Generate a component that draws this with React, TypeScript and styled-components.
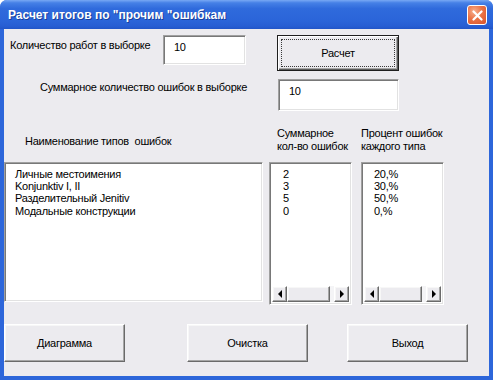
import styled, { createGlobalStyle } from "styled-components";

const GlobalStyle = createGlobalStyle`
  html, body {
    margin: 0;
    padding: 0;
    background: #ffffff;
  }
  * {
    box-sizing: border-box;
  }
`;

const errorTypes = [
  { name: "Личные местоимения", count: 2, percent: "20,%" },
  { name: "Konjunktiv I, II", count: 3, percent: "30,%" },
  { name: "Разделительный Jenitiv", count: 5, percent: "50,%" },
  { name: "Модальные конструкции", count: 0, percent: "0,%" },
];

const ScrollBar = () => (
  <HScroll>
    <ArrowButton>
      <Triangle $dir="left" />
    </ArrowButton>
    <Thumb />
    <Track />
    <ArrowButton>
      <Triangle $dir="right" />
    </ArrowButton>
  </HScroll>
);

const App = () => {
  return (
    <>
      <GlobalStyle />
      <Window>
        <TitleBar>
          <Title>Расчет итогов по "прочим "ошибкам</Title>
          <CloseButton>
            <svg width="11" height="11" viewBox="0 0 11 11">
              <path d="M1.5 1.5 L9.5 9.5 M9.5 1.5 L1.5 9.5" stroke="#fff" strokeWidth="2.2" strokeLinecap="round" />
            </svg>
          </CloseButton>
        </TitleBar>
        <Body>
          <TopRow>
            <Label $width={159} $indent={6} $top={4}>
              Количество работ в выборке
            </Label>
            <TextBox $width={83} $height={30}>10</TextBox>
            <DefaultButton>
              <FocusRect>Расчет</FocusRect>
            </DefaultButton>
          </TopRow>
          <SecondRow>
            <Label $width={274} $indent={36} $top={2}>
              Суммарное количество ошибок в выборке
            </Label>
            <TextBox $width={121} $height={32}>10</TextBox>
          </SecondRow>
          <HeaderRow>
            <Label $width={273} $indent={21} $top={8}>
              Наименование типов&nbsp; ошибок
            </Label>
            <ColumnHeader $width={84}>
              Суммарное
              <br />
              кол-во ошибок
            </ColumnHeader>
            <ColumnHeader $width={90}>
              Процент ошибок
              <br />
              каждого типа
            </ColumnHeader>
          </HeaderRow>
          <ListRow>
            <ListBox $width={259} $height={140} $offset={0}>
              <ListItems $pad={8}>
                {errorTypes.map((t) => (
                  <ListItem key={t.name}>{t.name}</ListItem>
                ))}
              </ListItems>
            </ListBox>
            <ListBox $width={83} $height={143} $offset={6}>
              <ListItems $pad={11}>
                {errorTypes.map((t) => (
                  <ListItem key={t.name}>{t.count}</ListItem>
                ))}
              </ListItems>
              <ScrollBar />
            </ListBox>
            <ListBox $width={83} $height={143} $offset={9}>
              <ListItems $pad={10}>
                {errorTypes.map((t) => (
                  <ListItem key={t.name}>{t.percent}</ListItem>
                ))}
              </ListItems>
              <ScrollBar />
            </ListBox>
          </ListRow>
          <ButtonRow>
            <PushButton $offset={0}>Диаграмма</PushButton>
            <PushButton $offset={62}>Очистка</PushButton>
            <PushButton $offset={39}>Выход</PushButton>
          </ButtonRow>
        </Body>
      </Window>
    </>
  );
};

export default App;

const uiFont = `"Liberation Sans", Arial, sans-serif`;

const Window = styled.div`
  width: 493px;
  height: 380px;
  display: flex;
  flex-direction: column;
  background: #2d66da;
  border-radius: 7px 7px 0 0;
  overflow: hidden;
`;

const TitleBar = styled.div`
  height: 29px;
  flex-shrink: 0;
  display: flex;
  align-items: center;
  justify-content: space-between;
  padding: 0 6px 0 8px;
  background: linear-gradient(
    to bottom,
    #78a8f4 0%,
    #4580e6 10%,
    #2f6adc 30%,
    #2b65d9 70%,
    #275ed3 90%,
    #2155c8 100%
  );
`;

const Title = styled.span`
  font-family: "Liberation Sans", Arial, sans-serif;
  font-weight: bold;
  font-size: 12px;
  color: #ffffff;
  text-shadow: 1px 1px 0 #1a3f9a;
  margin-top: 1px;
`;

const CloseButton = styled.div`
  width: 20px;
  height: 20px;
  border: 1px solid #ffffff;
  border-radius: 3px;
  display: flex;
  align-items: center;
  justify-content: center;
  background: radial-gradient(circle at 35% 30%, #f7b08f 0%, #ea7346 45%, #d8522a 100%);
  margin-top: 1px;
`;

const Body = styled.div`
  flex: 1;
  display: flex;
  flex-direction: column;
  background: #ecebef;
  margin: 0 4px 4px 4px;
  font-family: ${uiFont};
  font-size: 11px;
  letter-spacing: -0.25px;
  color: #000000;
`;

const TopRow = styled.div`
  display: flex;
  align-items: flex-start;
  margin-top: 6px;
`;

const SecondRow = styled.div`
  display: flex;
  align-items: flex-start;
  margin-top: 8px;
`;

const HeaderRow = styled.div`
  display: flex;
  align-items: flex-start;
  margin-top: 16px;
  height: 35px;
`;

const ListRow = styled.div`
  display: flex;
  align-items: flex-start;
`;

const ButtonRow = styled.div`
  display: flex;
  margin-top: 19px;
`;

const Label = styled.div<{ $width: number; $indent: number; $top: number }>`
  width: ${(p) => p.$width}px;
  flex-shrink: 0;
  padding-left: ${(p) => p.$indent}px;
  padding-top: ${(p) => p.$top}px;
  white-space: nowrap;
  line-height: 13px;
`;

const ColumnHeader = styled.div<{ $width: number }>`
  width: ${(p) => p.$width}px;
  flex-shrink: 0;
  line-height: 13px;
  white-space: nowrap;
`;

const sunken = `
  background: #ffffff;
  border: 1px solid;
  border-color: #a0a0a0 #ffffff #ffffff #a0a0a0;
  box-shadow: inset 1px 1px 0 #787878, inset -1px -1px 0 #e2e2e2;
`;

const TextBox = styled.div<{ $width: number; $height: number }>`
  ${sunken}
  flex-shrink: 0;
  width: ${(p) => p.$width}px;
  height: ${(p) => p.$height}px;
  padding: 5px 0 0 10px;
  line-height: 13px;
`;

const raised = `
  background: #ecebef;
  border: 1px solid;
  border-color: #ffffff #6a6a6a #6a6a6a #ffffff;
  box-shadow: inset -1px -1px 0 #a6a6a6, inset 1px 1px 0 #f7f7f7;
`;

const PushButton = styled.div<{ $offset: number }>`
  ${raised}
  flex-shrink: 0;
  width: 121px;
  height: 38px;
  margin-left: ${(p) => p.$offset}px;
  display: flex;
  align-items: center;
  justify-content: center;
`;

const DefaultButton = styled.div`
  flex-shrink: 0;
  width: 122px;
  height: 36px;
  margin-left: 31px;
  border: 1px solid #1e1e1e;
  display: flex;
  background: #ecebef;
  box-shadow: inset 1px 1px 0 #ffffff, inset -1px -1px 0 #5a5a5a, inset -2px -2px 0 #a6a6a6;
`;

const FocusRect = styled.div`
  flex: 1;
  margin: 3px;
  border: 1px dotted #3a3a3a;
  display: flex;
  align-items: center;
  justify-content: center;
`;

const ListBox = styled.div<{ $width: number; $height: number; $offset: number }>`
  ${sunken}
  flex-shrink: 0;
  width: ${(p) => p.$width}px;
  height: ${(p) => p.$height}px;
  margin-left: ${(p) => p.$offset}px;
  padding: 2px;
  display: flex;
  flex-direction: column;
  justify-content: space-between;
`;

const ListItems = styled.div<{ $pad: number }>`
  display: flex;
  flex-direction: column;
  padding: 3px 0 0 ${(p) => p.$pad}px;
`;

const ListItem = styled.div`
  line-height: 12.2px;
  white-space: nowrap;
`;

const HScroll = styled.div`
  height: 16px;
  display: flex;
  background: #f4f4f6;
`;

const ArrowButton = styled.div`
  ${raised}
  width: 15px;
  height: 16px;
  display: flex;
  align-items: center;
  justify-content: center;
`;

const Thumb = styled.div`
  ${raised}
  width: 43px;
  height: 16px;
`;

const Track = styled.div`
  flex: 1;
`;

const Triangle = styled.div<{ $dir: "left" | "right" }>`
  width: 0;
  height: 0;
  border-top: 4px solid transparent;
  border-bottom: 4px solid transparent;
  ${(p) =>
    p.$dir === "left"
      ? "border-right: 4px solid #000;"
      : "border-left: 4px solid #000;"}
`;
